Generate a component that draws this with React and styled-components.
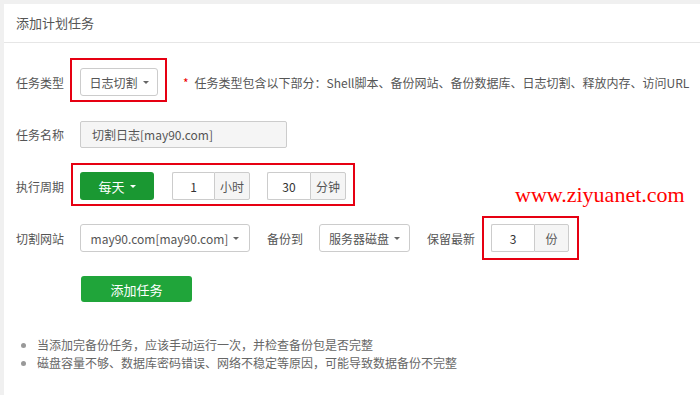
import React from 'react';
import styled, { createGlobalStyle } from 'styled-components';

const GlobalStyle = createGlobalStyle`
  html, body {
    margin: 0;
    padding: 0;
    background: #f0f0f0;
    font-family: 'Noto Sans CJK SC', 'Noto Sans', sans-serif;
    font-size: 12px;
    color: #555;
  }
`;

const Panel = styled.div`
  margin: 4px 0 0 4px;
  background: #fff;
  min-height: 391px;
  position: relative;
`;

const PanelTitle = styled.div`
  height: 38px;
  line-height: 38px;
  padding-left: 12px;
  font-size: 13px;
  color: #555;
  border-bottom: 1px solid #e6e6e6;
`;

const Form = styled.div`
  padding: 25px 0 0 12px;
`;

const Row = styled.div`
  display: flex;
  align-items: center;
  height: 28px;
  margin-bottom: 24px;
`;

const Label = styled.div`
  width: 64px;
  flex-shrink: 0;
  color: #555;
`;

const InlineLabel = styled.div`
  margin: 0 16px 0 17px;
  color: #555;
`;

const Highlight = styled.div`
  position: relative;
  display: flex;
  align-items: center;
  &::after {
    content: '';
    position: absolute;
    top: ${p => p.$t}px;
    left: ${p => p.$l}px;
    right: ${p => p.$r}px;
    bottom: ${p => p.$b}px;
    border: 2px solid #e60012;
    pointer-events: none;
  }
`;

const Caret = styled.span`
  display: inline-block;
  width: 0;
  height: 0;
  margin-left: 5px;
  border-top: 3px solid ${p => p.$color || '#666'};
  border-left: 3.5px solid transparent;
  border-right: 3.5px solid transparent;
  vertical-align: middle;
`;

const Dropdown = styled.div`
  box-sizing: border-box;
  width: ${p => p.$w}px;
  height: 28px;
  border: 1px solid #ccc;
  border-radius: 3px;
  background: #fff;
  display: flex;
  align-items: center;
  justify-content: center;
  color: #555;
  font-size: 12px;
`;

const Note = styled.div`
  margin-left: 25px;
  color: #555;
  white-space: nowrap;
  span {
    color: #e00;
    margin-right: 6px;
  }
`;

const TextInput = styled.div`
  box-sizing: border-box;
  width: 207px;
  height: 27px;
  border: 1px solid #ccc;
  border-radius: 2px;
  background: #f5f5f5;
  padding-left: 11px;
  display: flex;
  align-items: center;
  color: #555;
  font-size: 12px;
`;

const GreenButton = styled.div`
  box-sizing: border-box;
  width: ${p => p.$w}px;
  height: ${p => p.$h}px;
  background: ${p => p.$dark ? '#1a9832' : '#20a53a'};
  border-radius: 3px;
  color: #fff;
  font-size: ${p => p.$fs || 12}px;
  display: flex;
  align-items: center;
  justify-content: center;
`;

const InputGroup = styled.div`
  display: flex;
  height: 28px;
  margin-left: ${p => p.$ml || 0}px;
`;

const NumInput = styled.div`
  box-sizing: border-box;
  width: ${p => p.$w}px;
  border: 1px solid #ccc;
  border-right: none;
  border-radius: 2px 0 0 2px;
  background: #fff;
  display: flex;
  align-items: center;
  justify-content: center;
  color: #333;
  font-size: 12px;
`;

const Addon = styled.div`
  box-sizing: border-box;
  width: ${p => p.$w}px;
  border: 1px solid #ccc;
  border-radius: 0 2px 2px 0;
  background: #f5f5f5;
  display: flex;
  align-items: center;
  justify-content: center;
  color: #555;
  font-size: 12px;
`;

const Watermark = styled.div`
  position: absolute;
  left: 511px;
  top: 178px;
  font-family: 'Liberation Serif', 'Times New Roman', serif;
  font-size: 22px;
  color: #f00;
  white-space: nowrap;
`;

const Tips = styled.ul`
  margin: 34px 0 0 0;
  padding: 0 0 0 33px;
  color: #666;
  font-size: 12px;
  line-height: 18px;
  li::marker {
    color: #999;
  }
`;

export default function App() {
  return (
    <>
      <GlobalStyle />
      <Panel>
        <PanelTitle>添加计划任务</PanelTitle>
        <Form>
          <Row>
            <Label>任务类型</Label>
            <Highlight $t={-10} $l={-10} $r={-9} $b={-6}>
              <Dropdown $w={78}>日志切割<Caret /></Dropdown>
            </Highlight>
            <Note><span>*</span>任务类型包含以下部分：Shell脚本、备份网站、备份数据库、日志切割、释放内存、访问URL</Note>
          </Row>
          <Row>
            <Label>任务名称</Label>
            <TextInput>切割日志[may90.com]</TextInput>
          </Row>
          <Row>
            <Label>执行周期</Label>
            <Highlight $t={-9} $l={-9} $r={-9} $b={-6}>
              <GreenButton $w={74} $h={28} $dark $fs={13}>每天<Caret $color="#fff" /></GreenButton>
              <InputGroup $ml={18}>
                <NumInput $w={42}>1</NumInput>
                <Addon $w={36}>小时</Addon>
              </InputGroup>
              <InputGroup $ml={17}>
                <NumInput $w={43}>30</NumInput>
                <Addon $w={36}>分钟</Addon>
              </InputGroup>
            </Highlight>
          </Row>
          <Row>
            <Label>切割网站</Label>
            <Dropdown $w={170}>may90.com[may90.com]<Caret /></Dropdown>
            <InlineLabel>备份到</InlineLabel>
            <Dropdown $w={91}>服务器磁盘<Caret /></Dropdown>
            <InlineLabel>保留最新</InlineLabel>
            <Highlight $t={-8} $l={-9} $r={-10} $b={-8}>
              <InputGroup>
                <NumInput $w={43}>3</NumInput>
                <Addon $w={35}>份</Addon>
              </InputGroup>
            </Highlight>
          </Row>
          <GreenButton $w={111} $h={26} $fs={13} style={{ marginLeft: 65 }}>添加任务</GreenButton>
        </Form>
        <Tips>
          <li>当添加完备份任务，应该手动运行一次，并检查备份包是否完整</li>
          <li>磁盘容量不够、数据库密码错误、网络不稳定等原因，可能导致数据备份不完整</li>
        </Tips>
        <Watermark>www.ziyuanet.com</Watermark>
      </Panel>
    </>
  );
}
